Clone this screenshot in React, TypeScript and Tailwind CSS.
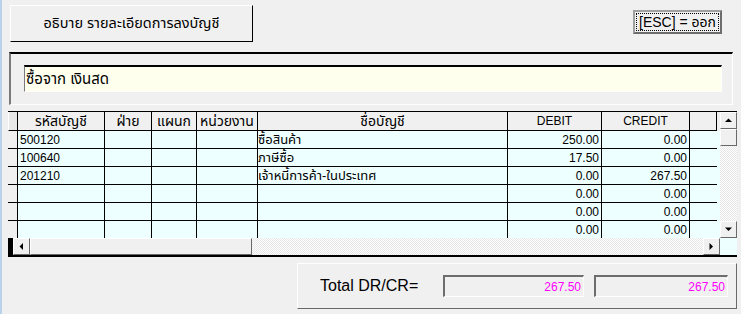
import React from 'react'

const thai = "font-['Liberation_Sans','Noto_Sans_Thai','Noto_Sans_Thai_UI','Tlwg_Typo','Loma','Garuda',sans-serif]"

interface Row {
  code: string
  name: string
  debit: string
  credit: string
}

const rows: Row[] = [
  { code: '500120', name: 'ซื้อสินค้า', debit: '250.00', credit: '0.00' },
  { code: '100640', name: 'ภาษีซื้อ', debit: '17.50', credit: '0.00' },
  { code: '201210', name: 'เจ้าหนี้การค้า-ในประเทศ', debit: '0.00', credit: '267.50' },
  { code: '', name: '', debit: '0.00', credit: '0.00' },
  { code: '', name: '', debit: '0.00', credit: '0.00' },
  { code: '', name: '', debit: '0.00', credit: '0.00' },
]

const cols = 'grid grid-cols-[10px_87px_47px_45px_61px_250px_94px_88px_27px]'
const cell = 'border-r border-b border-black h-[18px] overflow-hidden whitespace-nowrap'
const raised = 'border border-t-white border-l-white border-r-[#696969] border-b-[#696969]'

function Arrow({ dir }: { dir: 'up' | 'down' | 'left' | 'right' }) {
  const pts = {
    up: '0,4 7,4 3.5,0.5',
    down: '0,0.5 7,0.5 3.5,4',
    left: '4,0 4,7 0.5,3.5',
    right: '0.5,0 0.5,7 4,3.5',
  }[dir]
  const horiz = dir === 'left' || dir === 'right'
  return (
    <div className={`flex items-center justify-center bg-[#f0f0f0] ${raised} w-[17px] h-[17px] shrink-0`}>
      <svg width={horiz ? 5 : 7} height={horiz ? 7 : 5}>
        <polygon points={pts} fill="#000" />
      </svg>
    </div>
  )
}

const track = 'bg-[repeating-conic-gradient(#ffffff_0_25%,#e6e6e6_0_50%)] bg-[length:2px_2px]'

export default function App() {
  return (
    <div className="flex w-[741px] h-[314px] bg-[#f0f0f0] overflow-hidden text-black">
      <div className="w-[2px] bg-[#b9d1ea] shrink-0" />
      <div className="flex flex-col flex-1">
        {/* top buttons */}
        <div className="flex items-start h-[52px]">
          <div
            className={`${thai} ml-[8px] mt-[5px] w-[243px] h-[37px] flex items-center justify-center text-[14.5px] border border-t-white border-l-white border-r-black border-b-black whitespace-nowrap`}
          >
            อธิบาย รายละเอียดการลงบัญชี
          </div>
          <div className="ml-[380px] mt-[10px] w-[89px] h-[24px] border-2 border-t-[#a0a0a0] border-l-[#a0a0a0] border-r-[#6d6d6d] border-b-[#6d6d6d] p-[1px]">
            <div
              className={`${thai} h-full flex items-center justify-center text-[14px] leading-none outline-1 outline-dotted outline-black -outline-offset-1 whitespace-nowrap`}
            >
              [ESC] = ออก
            </div>
          </div>
        </div>

        {/* description frame */}
        <div className="ml-[7px] w-[724px] h-[53px] border-t-2 border-l-2 border-t-[#000] border-l-[#7a7a7a] border-r border-b border-r-white border-b-white">
          <div
            className={`${thai} ml-[13px] mt-[11px] w-[698px] h-[27px] bg-[#ffffee] border-t-2 border-l border-t-black border-l-[#7a7a7a] border-r border-b border-r-white border-b-white flex items-center pl-[1px] text-[15px]`}
          >
            ซื้อจาก เงินสด
          </div>
        </div>

        {/* grid */}
        <div className="ml-[6px] mt-[6px] w-[729px] flex flex-col">
          <div className="flex h-[127px] border-t border-black">
            <div className="flex-1 overflow-hidden">
              <div className={`${cols} bg-[#f0f0f0]`}>
                <div className="border-r border-b border-black h-[19px] bg-[#e8e8e8] border-l border-l-white" />
                {['รหัสบัญชี', 'ฝ่าย', 'แผนก', 'หน่วยงาน', 'ชื่อบัญชี'].map((h) => (
                  <div
                    key={h}
                    className={`${thai} border-r border-b border-black h-[19px] flex items-center justify-center text-[14px] leading-none overflow-hidden whitespace-nowrap`}
                  >
                    {h}
                  </div>
                ))}
                {['DEBIT', 'CREDIT'].map((h) => (
                  <div
                    key={h}
                    className="border-r border-b border-black h-[19px] flex items-center justify-center text-[12px] font-['Liberation_Sans',sans-serif]"
                  >
                    {h}
                  </div>
                ))}
                <div className="border-r border-b border-black h-[19px]" />
              </div>
              {rows.map((r, i) => (
                <div key={i} className={`${cols} bg-[#eeffff] text-[12px] font-['Liberation_Sans',sans-serif]`}>
                  <div className={`${cell} bg-[#f0f0f0]`} />
                  <div className={`${cell} pl-[2px] flex items-center`}>{r.code}</div>
                  <div className={cell} />
                  <div className={cell} />
                  <div className={cell} />
                  <div className={`${cell} ${thai} text-[13px] flex items-center`}>{r.name}</div>
                  <div className={`${cell} flex items-center justify-end pr-[2px]`}>{r.debit}</div>
                  <div className={`${cell} flex items-center justify-end pr-[2px]`}>{r.credit}</div>
                  <div className="border-b border-black h-[18px]" />
                </div>
              ))}
            </div>
            <div className="w-[17px] flex flex-col shrink-0">
              <Arrow dir="up" />
              <div className={`w-[17px] h-[17px] bg-[#f0f0f0] ${raised}`} />
              <div className={`flex-1 ${track}`} />
              <Arrow dir="down" />
            </div>
          </div>
          <div className="flex h-[17px]">
            <div className="w-[5px] bg-black" />
            <Arrow dir="left" />
            <div className={`w-[222px] h-[17px] bg-[#f0f0f0] ${raised}`} />
            <div className={`flex-1 ${track}`} />
            <Arrow dir="right" />
            <div className="w-[17px] bg-[#eeffff]" />
          </div>
          <div className="h-[2px] bg-black" />
        </div>

        {/* totals */}
        <div className={`ml-[295px] mt-[6px] w-[440px] h-[46px] ${raised} flex items-center`}>
          <div className="ml-[22px] w-[123px] text-[16px] font-['Liberation_Sans',sans-serif]">Total DR/CR=</div>
          {['267.50', '267.50'].map((v, i) => (
            <div
              key={i}
              className={`${i === 0 ? 'w-[141px]' : 'ml-[10px] w-[134px]'} h-[22px] border-t-2 border-l-2 border-t-[#6d6d6d] border-l-[#6d6d6d] border-r border-b border-r-white border-b-white flex items-center justify-end pr-[2px] text-[12px] text-[#ff00ff] font-['Liberation_Sans',sans-serif]`}
            >
              {v}
            </div>
          ))}
        </div>
      </div>
    </div>
  )
}
